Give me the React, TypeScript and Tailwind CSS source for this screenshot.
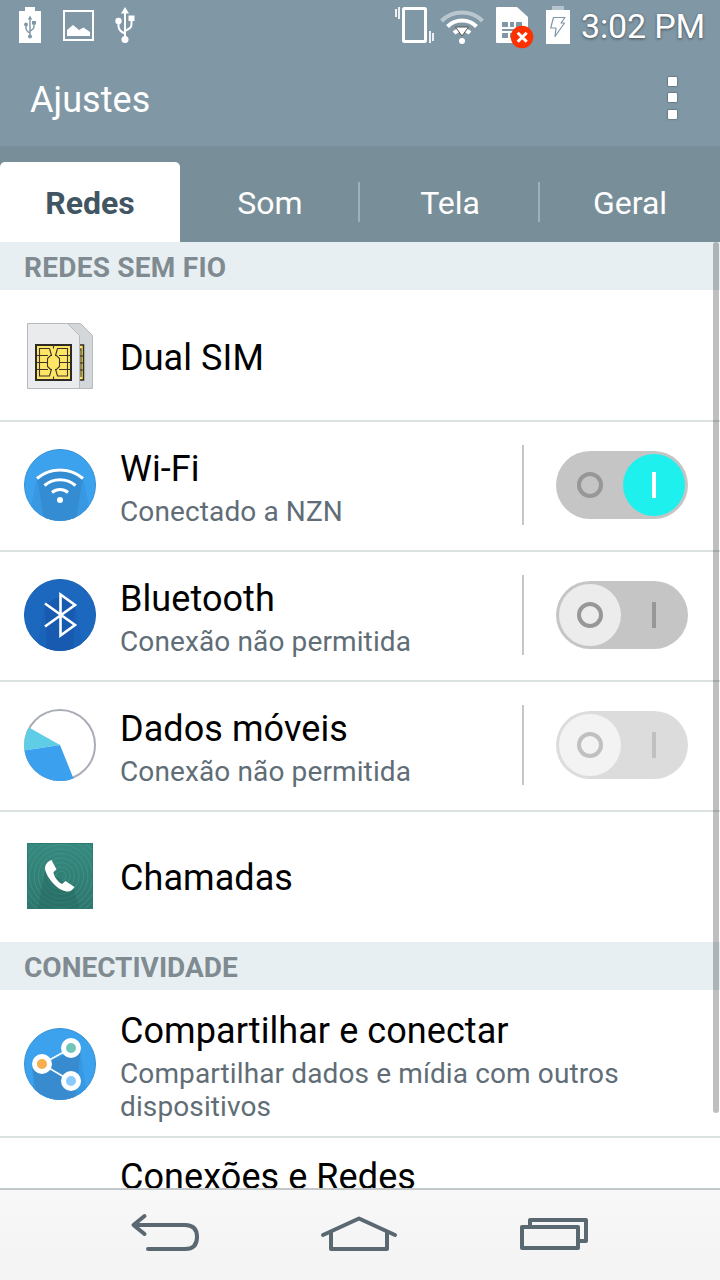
import { useState } from "react"
import type { ReactNode } from "react"
import clsx from "clsx"

const tabs = ["Redes", "Som", "Tela", "Geral"]

function BatteryUsbIcon() {
  return (
    <svg width="24" height="36" viewBox="0 0 24 36">
      <path d="M7 0h10v4h6v32H1V4h6z" fill="#fff" />
      <g stroke="#8097a5" strokeWidth="1.4" fill="none">
        <path d="M12 11v18M8 18v3c0 3 2 4 4 5M16 16v4c0 2-2 3-4 4" />
      </g>
      <g fill="#8097a5">
        <path d="M12 8.5l2.2 4H9.8zM14 14h4v3.5h-4z" />
        <circle cx="8" cy="17.5" r="1.9" />
        <circle cx="12" cy="29.5" r="2" />
      </g>
    </svg>
  )
}

function PictureIcon() {
  return (
    <svg width="32" height="32" viewBox="0 0 32 32">
      <path d="M2 2h29v29H2z" fill="none" stroke="#fff" strokeWidth="2" />
      <path d="M5 27v-6l6-5 6 5 4.5-2.5 6.5 4.5v4z" fill="#fff" />
    </svg>
  )
}

function UsbIcon() {
  return (
    <svg width="20" height="36" viewBox="0 0 20 36">
      <path d="M10 4v28M3.5 14v5c0 4 2.5 6 6.5 7.5M16.5 11v6c0 4-2.5 5-6.5 7" fill="none" stroke="#fff" strokeWidth="2" />
      <path d="M10 0l4 6.5H6zM13.500 8.500h6v5.500h-6z" fill="#fff" />
      <circle cx="3.5" cy="14" r="3.2" fill="#fff" />
      <circle cx="10" cy="32.5" r="3.5" fill="#fff" />
    </svg>
  )
}

function VibrateIcon() {
  return (
    <svg width="40" height="38" viewBox="0 0 40 38">
      <rect x="8.5" y="2.5" width="22" height="33" rx="1" fill="none" stroke="#fff" strokeWidth="3" />
      <path d="M1 3v8M4 1v12M35 25v12M38 27v8" stroke="#fff" strokeWidth="1.7" />
    </svg>
  )
}

function StatusWifiIcon() {
  return (
    <svg width="44" height="34" viewBox="0 0 44 34">
      <path d="M1.5 11a29 29 0 0 1 41 0" fill="none" stroke="#b8c6ce" strokeWidth="4" />
      <path d="M7.5 16.5a20.500 20.500 0 0 1 29 0" fill="none" stroke="#fff" strokeWidth="4" />
      <path d="M14 23a11.5 11.5 0 0 1 16 0" fill="none" stroke="#fff" strokeWidth="4" />
      <path d="M15.5 17h13l-6.5 9z" fill="#fff" stroke="#56554f" strokeWidth="1" />
      <circle cx="22" cy="31" r="3" fill="#fff" />
    </svg>
  )
}

function NoSimIcon() {
  return (
    <svg width="40" height="43" viewBox="0 0 40 43">
      <path d="M2 1h20l11 10v26H2q-1 0-1-1V2q0-1 1-1z" fill="#fff" />
      <path d="M7 16h6v5H7zM15 16h4v5h-4zM21 16h6v5h-6zM7 23h12v2H7zM7 27h6v5H7zM15 27h4v5h-4zM21 23h6v3h-6z" fill="#8097a5" />
      <circle cx="27" cy="31" r="11.3" fill="#ff3100" />
      <path d="M22.700 26.700l9 9M31.700 26.700l-9 9" stroke="#fff" strokeWidth="3" />
    </svg>
  )
}

function BatteryIcon() {
  return (
    <svg width="24" height="38" viewBox="0 0 24 38">
      <path d="M6 0h12v4H6z" fill="#b5c3cc" />
      <path d="M0 4h24v34H0z" fill="#fff" />
      <path d="M7.5 11.5H19l-4 5.500h3.500l-9.500 13.500 1-8.500H4.700z" fill="#fff" stroke="#8097a5" strokeWidth="1.2" strokeLinejoin="round" />
    </svg>
  )
}

function SimIcon() {
  return (
    <svg width="66" height="66" viewBox="0 0 66 66">
      <path d="M40 .5h13.5l12 12v53H40z" fill="#d4d7da" stroke="#b6bac0" />
      <path d="M52 22h4.500v35H52" fill="#ffe566" stroke="#2e2a25" strokeWidth="1.5" />
      <path d="M52 27h2M52 33h4M52 40h4M52 47h4M54 25v29" stroke="#2e2a25" />
      <path d="M.5.5h40l12 12v53H.5z" fill="#e9ebed" stroke="#b6bac0" />
      <path d="M9 22h35v35H9z" fill="#ffe566" stroke="#2e2a25" strokeWidth="2" />
      <g fill="none" stroke="#3a3528" strokeWidth="1.1">
        <path d="M22.5 25.5h-10v27.500h10l2-7M30.500 25.500h10v27.500h-10l-2-7M22.500 25.500l2 7M30.500 25.500l-2 7" />
        <path d="M26.500 22v3.500M26.500 53.500V57M10 32.500h11M10 39.500h10.500M10 46.500h11M43 32.500H32M43 39.500H32.500M43 46.500H32" />
        <path d="M25 32.500h-1.500l-3 3v8l3 3H25M28 32.500h1.500l3 3v8l-3 3H28" />
      </g>
    </svg>
  )
}

function WifiIcon() {
  return (
    <svg width="72" height="72" viewBox="0 0 72 72">
      <defs>
        <clipPath id="wifiClip"><circle cx="36" cy="36" r="36" /></clipPath>
      </defs>
      <circle cx="36" cy="36" r="35.5" fill="#3ca2ee" stroke="#348fd4" />
      <g clipPath="url(#wifiClip)">
        <path d="M13 28L4 72h64L59 28Q36 10 13 28z" fill="#3899e2" />
        <path d="M13 28l7 44h32l7-44Q36 10 13 28z" fill="#348dd3" />
      </g>
      <g fill="none" stroke="#fff" strokeWidth="3">
        <path d="M13 29.500a35.500 35.500 0 0 1 46 0" />
        <path d="M20.500 36.500a23.500 23.500 0 0 1 31 0" />
        <path d="M28 43.500a12.500 12.500 0 0 1 16 0" />
      </g>
      <circle cx="36" cy="51" r="3" fill="#fff" />
    </svg>
  )
}

function BluetoothIcon() {
  return (
    <svg width="72" height="72" viewBox="0 0 72 72">
      <defs>
        <clipPath id="btClip"><circle cx="36" cy="36" r="36" /></clipPath>
      </defs>
      <circle cx="36" cy="36" r="35.5" fill="#1b68be" stroke="#185fb3" />
      <g clipPath="url(#btClip)">
        <path d="M21 25l-9 47h48l-9-47z" fill="#1a63ba" />
        <path d="M21 25l2 47h26l2-47-14-8z" fill="#185ab0" />
      </g>
      <path d="M21 24.500l30 21.500-14.500 10.500v-41L51 26 21 47.500" fill="none" stroke="#fff" strokeWidth="2.6" />
    </svg>
  )
}

function DataIcon() {
  return (
    <svg width="72" height="72" viewBox="0 0 72 72">
      <circle cx="36" cy="36" r="35" fill="#fff" stroke="#a9adb6" strokeWidth="2" />
      <path d="M36 36L5 18.500A36 36 0 0 0 .5 41.500z" fill="#5fcde5" />
      <path d="M36 36L.5 41.500A36 36 0 0 0 49.500 69.500z" fill="#3ba1ee" />
    </svg>
  )
}

function CallIcon() {
  return (
    <svg width="66" height="66" viewBox="0 0 66 66">
      <defs>
        <linearGradient id="callBg" x1="0" y1="0" x2="0" y2="1">
          <stop offset="0" stopColor="#368a7f" />
          <stop offset="1" stopColor="#2d766e" />
        </linearGradient>
      </defs>
      <path d="M0 0h66v66H0z" fill="url(#callBg)" />
      <g fill="none" stroke="#4a9a8f" strokeOpacity=".6">
        {[5, 9, 13.5, 18, 22.5, 27, 31.5, 36, 40.5].map((r) => (
          <circle key={r} cx="34" cy="33" r={r} />
        ))}
      </g>
      <path d="M18 26l-7 40h42l-7-21z" fill="#26695f" opacity=".45" />
      <path d="M.5.5h65v65H.5z" fill="none" stroke="#2c7a70" />
      <path d="M24.500 17c-5 2-7.500 6-6 11 3 9 12 19 21 20.500 4 .5 6-1.500 8-4.500l-9-6-3.500 3c-4-2-7-6-8-9.500-.5-1-.5-2-.5-2.500l3-2.500z" fill="#fff" />
    </svg>
  )
}

function ShareIcon() {
  return (
    <svg width="72" height="72" viewBox="0 0 72 72">
      <defs>
        <clipPath id="shareClip"><circle cx="36" cy="36" r="36" /></clipPath>
      </defs>
      <circle cx="36" cy="36" r="35.5" fill="#3ca2ee" stroke="#348fd4" />
      <g clipPath="url(#shareClip)">
        <path d="M8 38l2 34h54L56 21z" fill="#3899e2" />
        <path d="M8 38l5 34h38l6-52L20 36z" fill="#378bce" />
      </g>
      <path d="M47 20L18 36l29 17" fill="none" stroke="#fff" strokeWidth="1.5" />
      <g stroke="#fff" strokeWidth="5">
        <circle cx="18" cy="36" r="7.5" fill="#f9ad4b" />
        <circle cx="47" cy="20" r="7.5" fill="#70c5b9" />
        <circle cx="47" cy="53" r="7.5" fill="#8acbff" />
      </g>
    </svg>
  )
}

function Toggle({ on = false, disabled = false }: { on?: boolean; disabled?: boolean }) {
  const [checked, setChecked] = useState(on)

  return (
    <button
      role="switch"
      aria-checked={checked}
      disabled={disabled}
      onClick={() => setChecked(!checked)}
      className={clsx("flex h-[68px] w-[132px] items-center justify-between rounded-full bg-[#c5c5c5] p-[3px]", disabled && "opacity-60")}
    >
      <span className={clsx("flex size-[62px] items-center justify-center rounded-full", !checked && "bg-[#ececec]")}>
        <span className="size-[26px] rounded-full border-4 border-[#979797]" />
      </span>
      <span className={clsx("flex size-[62px] items-center justify-center rounded-full", checked && "bg-[#1ef0ee]")}>
        <span className={clsx("h-[26px] w-1", checked ? "bg-white" : "bg-[#979797]")} />
      </span>
    </button>
  )
}

function SectionTitle({ children, className }: { children: ReactNode; className?: string }) {
  return (
    <h2 className={clsx("h-12 shrink-0 bg-[#e8eff3] px-6 pt-0.5 text-[28px] leading-[48px] font-bold text-[#808b91]", className)}>
      {children}
    </h2>
  )
}

type RowProps = {
  icon?: ReactNode
  title: string
  text?: string
  toggle?: ReactNode
  last?: boolean
  className?: string
}

function Row({ icon, title, text, toggle, last, className }: RowProps) {
  return (
    <div className={clsx("flex shrink-0 items-center border-b-2", last ? "border-white" : "border-[#dce1e1]", className)}>
      <div className="flex w-[120px] shrink-0 pl-6">
        <div className={clsx("flex w-[72px] justify-center", !toggle && "pt-0.5")}>{icon}</div>
      </div>
      <div className="grow pt-1.5">
        <h3 className="text-[36px] leading-[42px] tracking-[0.07px] text-black">{title}</h3>
        {text && <p className="mt-[5px] text-[28px] leading-[33px] tracking-[0.12px] text-[#606d76]">{text}</p>}
      </div>
      {toggle && (
        <div className="mr-8 flex h-20 shrink-0 items-center border-l-2 border-[#c3c6cb] pl-8">{toggle}</div>
      )}
    </div>
  )
}

export default function App() {
  const [active, setActive] = useState("Redes")

  return (
    <div className="flex h-[1280px] w-[720px] flex-col overflow-hidden bg-white font-['Roboto',sans-serif]">
      {/* Status bar */}
      <div className="flex h-[50px] shrink-0 items-start justify-between bg-[#8097a5]">
        <div className="flex pl-[18px]">
          <div className="pt-[7px]"><BatteryUsbIcon /></div>
          <div className="ml-5 pt-[9px]"><PictureIcon /></div>
          <div className="ml-[21px] pt-[7px]"><UsbIcon /></div>
        </div>
        <div className="flex pr-[15px]">
          <div className="pt-[6px]"><VibrateIcon /></div>
          <div className="ml-[5px] pt-[10px]"><StatusWifiIcon /></div>
          <div className="ml-[11px] pt-[6px]"><NoSimIcon /></div>
          <div className="ml-[11px] pt-[6px]"><BatteryIcon /></div>
          <span className="ml-[11px] pt-[5px] text-[34px] leading-[42px] tracking-[-0.15px] text-white [text-shadow:0_1px_3px_rgba(0,0,0,0.5)]">3:02 PM</span>
        </div>
      </div>

      {/* Title */}
      <div className="flex h-24 shrink-0 items-center justify-between bg-[#8097a5] pr-[43px] pl-[30px]">
        <h1 className="pt-1 text-[36px] leading-[42px] tracking-[0.05px] text-white">Ajustes</h1>
        <div className="flex h-[43px] flex-col justify-between pb-px">
          <span className="size-[9px] rounded-[1px] bg-white shadow-[0_0_2px_rgba(0,0,0,0.6)]" />
          <span className="size-[9px] rounded-[1px] bg-white shadow-[0_0_2px_rgba(0,0,0,0.6)]" />
          <span className="size-[9px] rounded-[1px] bg-white shadow-[0_0_2px_rgba(0,0,0,0.6)]" />
        </div>
      </div>

      {/* Tabs */}
      <div className="flex h-24 shrink-0 bg-[#788e98] pt-4">
        {tabs.map((tab, i) => (
          <button
            key={tab}
            onClick={() => setActive(tab)}
            className={clsx(
              "flex w-[180px] items-center text-[32px]",
              tab === active ? "rounded-t-[5px] bg-white font-bold text-[#425563]" : "text-white",
            )}
          >
            <span className="grow pt-0.5">{tab}</span>
            {(i === 1 || i === 2) && <span className="-ml-0.5 h-10 w-0.5 bg-[#a0afb8]" />}
          </button>
        ))}
      </div>

      {/* List */}
      <div className="relative flex min-h-0 grow flex-col overflow-hidden">
        <SectionTitle className="tracking-[0.25px]">REDES SEM FIO</SectionTitle>
        <Row className="h-[132px]" icon={<SimIcon />} title="Dual SIM" />
        <Row className="h-[130px] pb-0.5" icon={<WifiIcon />} title="Wi-Fi" text="Conectado a NZN" toggle={<Toggle on />} />
        <Row className="h-[130px] pb-0.5" icon={<BluetoothIcon />} title="Bluetooth" text="Conexão não permitida" toggle={<Toggle />} />
        <Row className="h-[130px] pb-0.5" icon={<DataIcon />} title="Dados móveis" text="Conexão não permitida" toggle={<Toggle disabled />} />
        <Row className="h-[130px] pb-0.5" icon={<CallIcon />} title="Chamadas" last />
        <SectionTitle>CONECTIVIDADE</SectionTitle>
        <Row
          className="h-[148px]"
          icon={<ShareIcon />}
          title="Compartilhar e conectar"
          text="Compartilhar dados e mídia com outros dispositivos"
        />
        <Row className="h-[74px]" title="Conexões e Redes" />
        <div className="absolute top-0 right-px h-[871px] w-1.5 rounded-full bg-black/25" />
      </div>

      {/* Navigation bar */}
      <div className="flex h-[92px] shrink-0 justify-center border-t-2 border-[#c2c7ca] bg-linear-to-b from-[#f8f8f8] to-[#f3f3f3]">
        <svg width="720" height="90" viewBox="0 1190 720 90" fill="none" stroke="#5a6872" strokeWidth="4" strokeLinejoin="round">
          <path d="M148 1249h37q12 0 12-12t-12-12h-51M144.500 1216l-11 9 11 9" strokeLinecap="round" />
          <path d="M323 1235l36-16.500 36 16.500M331 1233v16h56v-16" strokeLinecap="round" />
          <path d="M522 1227h56v21h-56zM530 1226v-6h56v21h-7" />
        </svg>
      </div>
    </div>
  )
}
